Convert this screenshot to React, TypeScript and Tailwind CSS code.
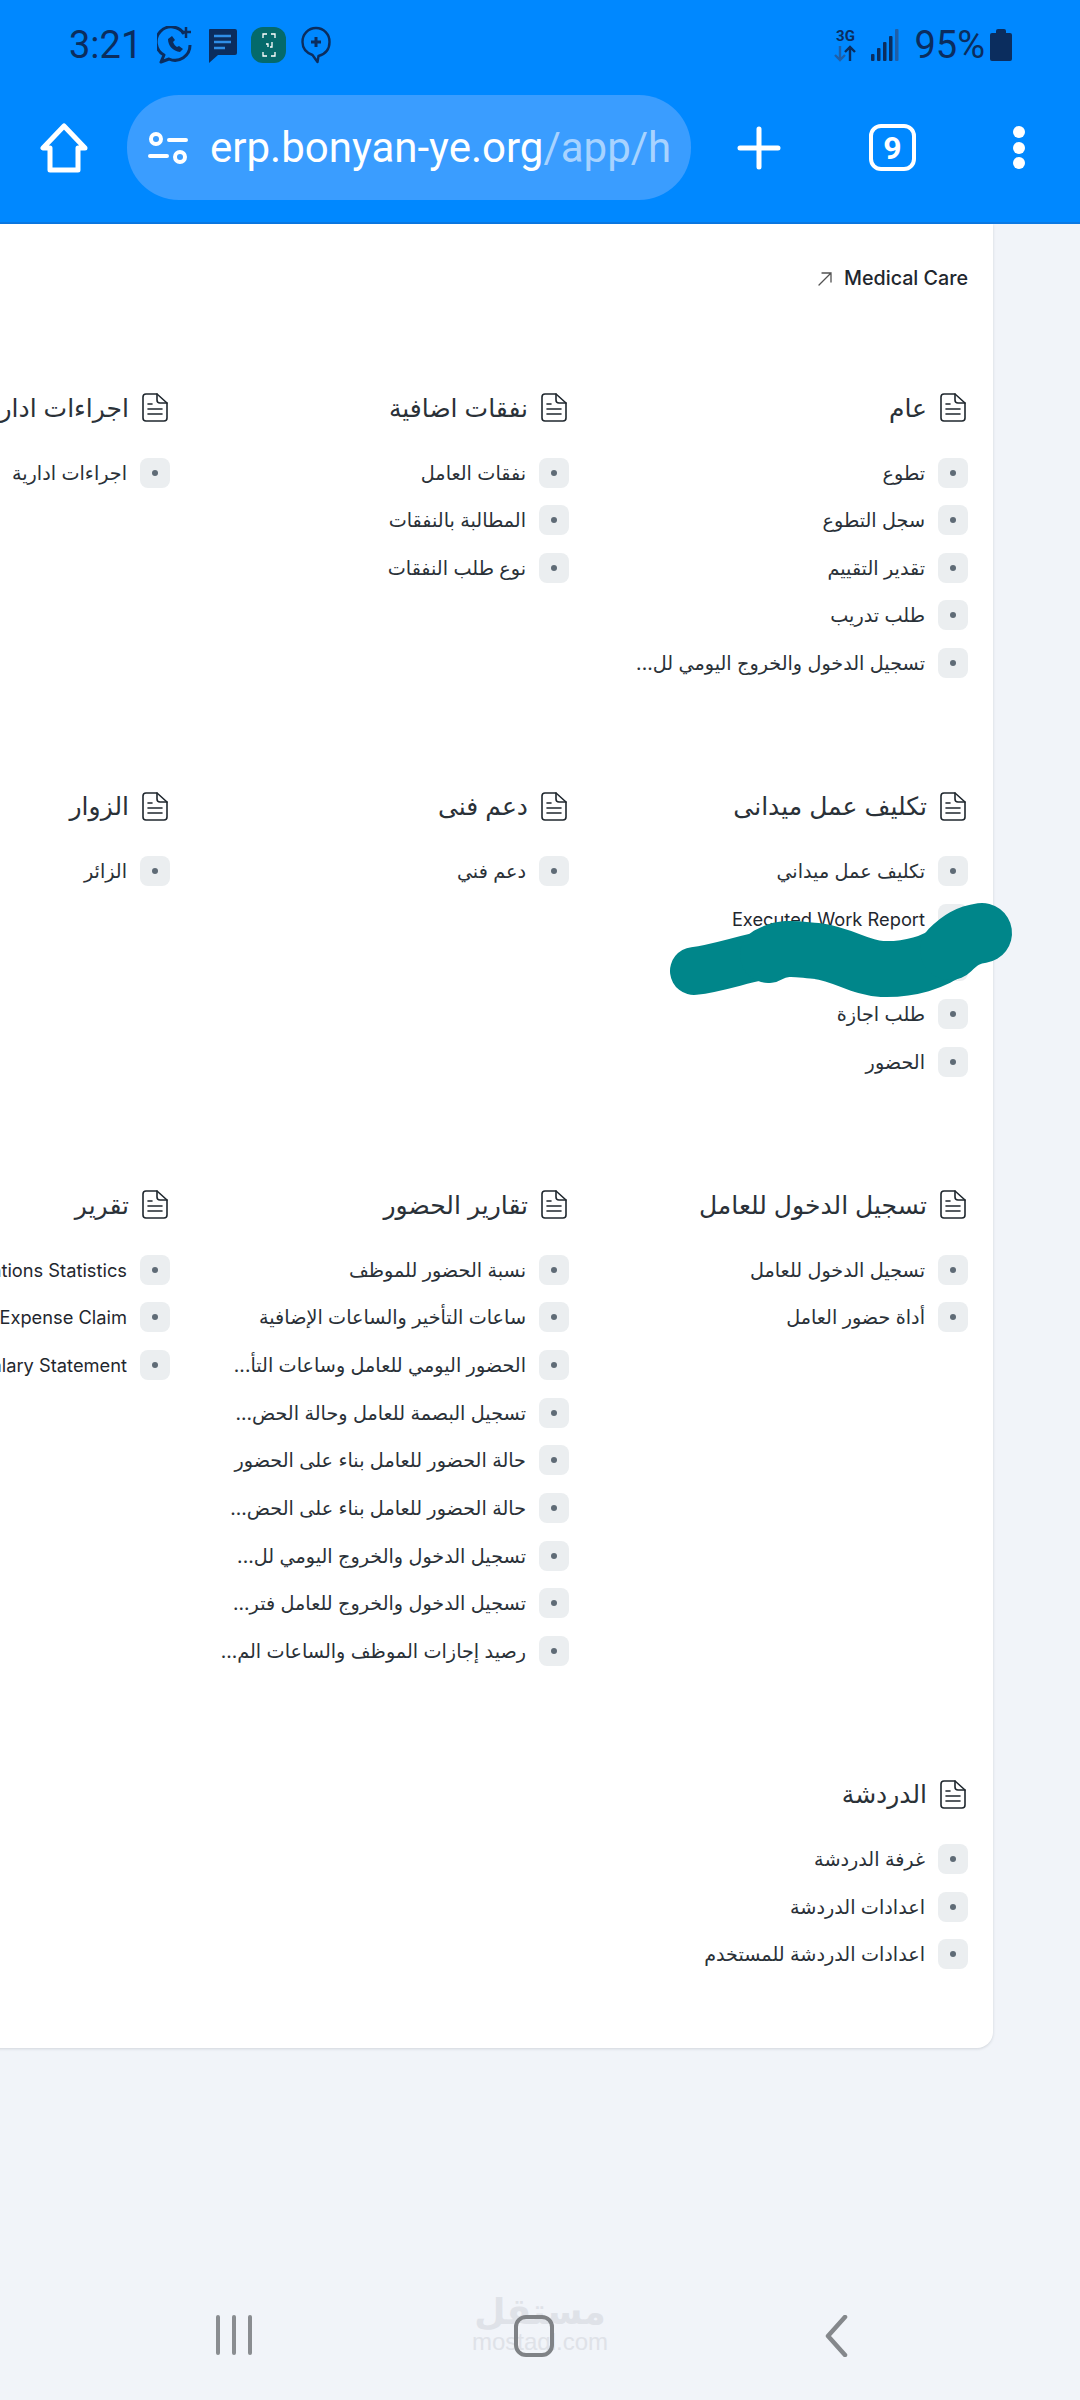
const sections = [
  { title: 'عام', items: ['تطوع', 'سجل التطوع', 'تقدير التقييم', 'طلب تدريب', 'تسجيل الدخول والخروج اليومي لل...'] },
  { title: 'نفقات اضافية', items: ['نفقات العامل', 'المطالبة بالنفقات', 'نوع طلب النفقات'] },
  { title: 'اجراءات ادارية', items: ['اجراءات ادارية'] },
  { title: 'تكليف عمل ميدانى', items: ['تكليف عمل ميداني', 'Executed Work Report', '', 'طلب اجازة', 'الحضور'] },
  { title: 'دعم فنى', items: ['دعم فني'] },
  { title: 'الزوار', items: ['الزائر'] },
  { title: 'تسجيل الدخول للعامل', items: ['تسجيل الدخول للعامل', 'أداة حضور العامل'] },
  {
    title: 'تقارير الحضور',
    items: [
      'نسبة الحضور للموظف',
      'ساعات التأخير والساعات الإضافية',
      'الحضور اليومي للعامل وساعات التأ...',
      'تسجيل البصمة للعامل وحالة الحض...',
      'حالة الحضور للعامل بناء على الحضور',
      'حالة الحضور للعامل بناء على الحض...',
      'تسجيل الدخول والخروج اليومي لل...',
      'تسجيل الدخول والخروج للعامل فتر...',
      'رصيد إجازات الموظف والساعات الم...',
    ],
  },
  { title: 'تقرير', items: ['Donations Statistics', 'Employee Expense Claim', 'Employee Salary Statement'] },
  { title: 'الدردشة', items: ['غرفة الدردشة', 'اعدادات الدردشة', 'اعدادات الدردشة للمستخدم'] },
];

function FileIcon() {
  return (
    <svg width="26" height="29" viewBox="0 0 26 29" fill="none" stroke="#1f272e" strokeWidth="1.6" strokeLinecap="round" strokeLinejoin="round" className="shrink-0">
      <path d="M4 1h11l10 9v15a3 3 0 0 1-3 3H4a3 3 0 0 1-3-3V4a3 3 0 0 1 3-3z" />
      <path d="M15 1v6a3 3 0 0 0 3 3h7" />
      <path d="M6 11h4M6 16h14M6 21h14" />
    </svg>
  );
}

function StatusIcons() {
  return (
    <div className="flex items-center">
      <svg width="36" height="38" viewBox="0 0 36 38" fill="none" stroke="#0b2d5e" strokeWidth="3" className="ml-[15px]">
        <path d="M27 8A15 15 0 1 0 7 29l-3 7 8-3a15 15 0 0 0 21-14" strokeLinejoin="round" />
        <path d="M11 13c0 7 5 12 12 13l3-3-4-3-2 1c-2-1-3-3-4-5l2-2-3-4z" fill="#0b2d5e" stroke="none" />
        <path d="M29 1v11M24 6h10" strokeWidth="2.5" />
      </svg>
      <svg width="31" height="38" viewBox="0 0 31 38" className="ml-[14px]">
        <path d="M3 3h25a2 2 0 0 1 2 2v22a2 2 0 0 1-2 2H11l-9 8V4a1 1 0 0 1 1-1z" fill="#0b2d5e" />
        <path d="M7 10h17M7 16h17M7 22h11" stroke="#2f8fe8" strokeWidth="2.5" />
      </svg>
      <div className="ml-[13px] flex h-[36px] w-[35px] items-center justify-center rounded-[12px] bg-[#046a6b]">
        <svg width="16" height="26" viewBox="0 0 16 26" fill="none" stroke="#ffffff" strokeWidth="1.3">
          <path d="M2 6V2h4M10 2h4v4M2 20v4h4M10 24h4v-4M5 12h2v3M11 10v5H9" />
        </svg>
      </div>
      <svg width="30" height="38" viewBox="0 0 30 38" fill="none" stroke="#0b2d5e" strokeWidth="2.4" className="ml-[15px]">
        <path d="M15 2a13.5 13.5 0 0 1 13.5 14c0 7-4 12-11 14l-1 6-5-7C6 27 1.500 23 1.500 16A13.500 13.500 0 0 1 15 2z" strokeLinejoin="round" />
        <path d="M15 11v10M10 16h10" strokeWidth="3" />
      </svg>
    </div>
  );
}

function StatusRight() {
  return (
    <div className="flex items-center">
      <div className="flex w-[24px] flex-col items-center font-['Roboto',sans-serif] text-[#0b2d5e]">
        <span className="text-[15px] leading-[15px] font-bold">3G</span>
        <svg width="22" height="17" viewBox="0 0 22 17" fill="none" stroke="#1f5fa8" strokeWidth="2.400" className="mt-[1px]">
          <path d="M6 1v14M1 10l5 5 5-5" />
          <path d="M16 16V2M11 7l5-5 5 5" stroke="#0b2d5e" />
        </svg>
      </div>
      <svg width="28" height="32" viewBox="0 0 28 32" fill="#0b2d5e" className="ml-[14px]">
        <rect x="0" y="25" width="3.500" height="7" rx="1" />
        <rect x="6" y="19" width="3.500" height="13" rx="1" />
        <rect x="12" y="13" width="3.500" height="19" rx="1" />
        <rect x="18" y="7" width="3.500" height="25" rx="1" />
        <rect x="24" y="0" width="3.500" height="32" rx="1" fill="#1f5fa8" />
      </svg>
      <span className="ml-[15px] font-['Roboto',sans-serif] text-[38px] leading-none text-[#0b2d5e]">95%</span>
      <div className="ml-[5px] flex flex-col items-center">
        <div className="h-[4px] w-[10px] rounded-t-[2px] bg-[#0b2d5e]" />
        <div className="h-[28px] w-[22px] rounded-[2px] bg-[#0b2d5e]" />
      </div>
    </div>
  );
}

function BrowserHeader() {
  return (
    <header className="h-[224px] shrink-0 border-b-2 border-[#0b79e3] bg-[#0088ff]">
      <div className="flex h-[90px] items-center justify-between pr-[68px] pl-[69px]">
        <div className="flex items-center">
          <span className="font-['Roboto',sans-serif] text-[38px] leading-none text-[#0b2d5e]">3:21</span>
          <StatusIcons />
        </div>
        <StatusRight />
      </div>
      <div className="mt-[5px] flex items-center">
        <svg width="48" height="50" viewBox="0 0 48 50" fill="none" stroke="#ffffff" strokeWidth="5" strokeLinejoin="round" strokeLinecap="round" className="ml-[40px]">
          <path d="M24 3L3 25h7v22h28V25h7z" />
        </svg>
        <div className="ml-[39px] flex h-[105px] w-[564px] items-center overflow-hidden rounded-[52px] bg-[#3a9dff] pl-[21px]">
          <svg width="40" height="32" viewBox="0 0 40 32" fill="none" stroke="#ffffff" strokeWidth="4" strokeLinecap="round" className="shrink-0">
            <circle cx="8" cy="7" r="5" />
            <path d="M21 8h17M2 24h17" />
            <circle cx="32" cy="25" r="5" />
          </svg>
          <span className="ml-[22px] font-['Roboto',sans-serif] text-[42px] leading-none whitespace-nowrap text-white">
            erp.bonyan-ye.org<span className="text-[#a8d3ff]">/app/h</span>
          </span>
        </div>
        <svg width="44" height="44" viewBox="0 0 44 44" stroke="#ffffff" strokeWidth="5" strokeLinecap="round" className="ml-[46px]">
          <path d="M22 3v38M3 22h38" />
        </svg>
        <div className="ml-[88px] flex h-[47px] w-[47px] items-center justify-center rounded-[12px] border-[4px] border-white font-['Roboto',sans-serif] text-[32px] leading-none font-bold text-white">
          9
        </div>
        <div className="ml-[97px] flex flex-col gap-[3.5px]">
          <div className="h-[12px] w-[12px] rounded-full bg-white" />
          <div className="h-[12px] w-[12px] rounded-full bg-white" />
          <div className="h-[12px] w-[12px] rounded-full bg-white" />
        </div>
      </div>
    </header>
  );
}

function Scribble() {
  return (
    <svg width="360" height="130" viewBox="670 890 360 130" fill="none" stroke="#00868a" strokeLinecap="round" strokeLinejoin="round" className="absolute top-[890px] left-[670px]">
      <path d="M694 971C720 968 745 958 768 955" strokeWidth="48" />
      <path d="M768 955C785 945 800 950 817 951C845 955 860 968 882 969C910 970 935 962 950 950" strokeWidth="56" />
      <path d="M950 950C960 940 968 935 982 933" strokeWidth="60" />
    </svg>
  );
}

function Section({ title, items }: { title: string; items: string[] }) {
  return (
    <div className="w-[399px]">
      <div className="flex h-[32px] items-center gap-[13px] pr-[2px]">
        <FileIcon />
        <h3 className="text-[25px] leading-[32px] font-normal whitespace-nowrap text-[#2a3138]">{title}</h3>
      </div>
      <ul className="mt-[34px] flex flex-col gap-[17.67px]">
        {items.map((item, index) => (
          <li key={index} className="flex h-[30px] items-center gap-[13px]">
            <span className="flex h-[30px] w-[30px] shrink-0 items-center justify-center rounded-[8px] bg-[#ebeef0]">
              <span className="h-[6px] w-[6px] rounded-full bg-[#5f6b76]" />
            </span>
            {/[a-z]/i.test(item) ? (
              <span className="text-[18.3px] leading-[30px] whitespace-nowrap">{item}</span>
            ) : (
              <span className="text-[19.2px] leading-[30px] whitespace-nowrap text-[#2a3138]">{item}</span>
            )}
          </li>
        ))}
      </ul>
    </div>
  );
}

export default function App() {
  return (
    <div className="relative flex h-[2400px] w-[1080px] flex-col overflow-hidden bg-[#f1f4f9] font-['Inter','DejaVu_Sans',sans-serif] text-[#1f272e]">
      <BrowserHeader />

      <main className="flex justify-end pr-[87px]">
        <div dir="rtl" className="w-[1300px] shrink-0 rounded-br-[16px] bg-white pt-[43px] pr-[25px] pb-[79px] shadow-[0_1px_3px_rgba(25,39,52,0.15)]">
          <div className="flex h-[24px] items-center gap-[12px] text-[19.7px] font-medium">
            <span dir="ltr" className="whitespace-nowrap">Medical Care</span>
            <svg width="14" height="14" viewBox="0 0 14 14" fill="none" stroke="#525252" strokeWidth="1.300" strokeLinecap="round">
              <path d="M1 13L13 1M4 1h9v9" />
            </svg>
          </div>
          <div className="mt-[100.5px] grid grid-cols-[399px_399px_399px] gap-y-[112px]">
            {sections.map((section) => (
              <Section key={section.title} title={section.title} items={section.items} />
            ))}
          </div>
        </div>
      </main>

      {/* mostaql watermark */}
      <div className="absolute top-[2293px] left-[475px] flex w-[130px] flex-col items-center text-[#dfe2e8]">
        <span dir="rtl" className="font-['DejaVu_Sans',sans-serif] text-[36px] leading-[38px] font-bold whitespace-nowrap">مستقل</span>
        <span className="font-['Liberation_Sans',sans-serif] text-[24px] leading-[22px]">mostaql.com</span>
      </div>

      <nav className="relative mt-auto flex h-[85px] shrink-0 items-start">
        <div className="ml-[216px] flex gap-[12px]">
          <div className="h-[40px] w-[4px] rounded-full bg-[#8a8d91]" />
          <div className="h-[40px] w-[4px] rounded-full bg-[#8a8d91]" />
          <div className="h-[40px] w-[4px] rounded-full bg-[#8a8d91]" />
        </div>
        <div className="ml-[262px] h-[42px] w-[40px] rounded-[12px] border-[4px] border-[#7f8286]" />
        <svg width="24" height="42" viewBox="0 0 24 42" fill="none" stroke="#85888c" strokeWidth="4.500" strokeLinecap="round" strokeLinejoin="round" className="ml-[270px]">
          <path d="M21 2L4 21l17 19" />
        </svg>
      </nav>

      <Scribble />
    </div>
  );
}
